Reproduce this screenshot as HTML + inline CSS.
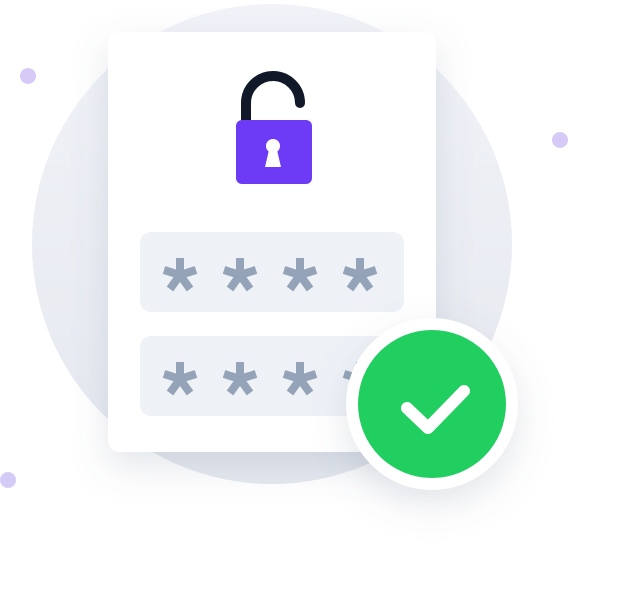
<!DOCTYPE html>
<html><head><style>
html,body{margin:0;padding:0;background:#fff;width:633px;height:614px;overflow:hidden}
</style></head><body>
<svg width="633" height="614" viewBox="0 0 633 614" xmlns="http://www.w3.org/2000/svg">
<defs>
<linearGradient id="bg" x1="0" y1="0" x2="0" y2="1">
<stop offset="0" stop-color="#f1f3f8"/><stop offset="1" stop-color="#e5e8ef"/></linearGradient>
<filter id="sh" x="-30%" y="-30%" width="160%" height="160%"><feDropShadow dx="0" dy="14" stdDeviation="18" flood-color="#64748b" flood-opacity="0.18"/></filter>
<g id="ast"><g stroke="#94a3b8" stroke-width="8">
<line x1="0" y1="0" x2="0" y2="-17"/>
<line x1="0" y1="0" x2="16" y2="-5"/>
<line x1="0" y1="0" x2="-16" y2="-5"/>
<line x1="0" y1="0" x2="10" y2="14"/>
<line x1="0" y1="0" x2="-10" y2="14"/></g></g>
</defs>
<circle cx="272" cy="244" r="240" fill="url(#bg)"/>
<circle cx="28" cy="76" r="8" fill="#d6cbf7"/>
<circle cx="560" cy="140" r="8" fill="#d6cbf7"/>
<circle cx="8" cy="480" r="8" fill="#d6cbf7"/>
<rect x="108" y="32" width="328" height="420" rx="12" fill="#fff" filter="url(#sh)"/>
<path d="M246 124 V103 A27 27 0 0 1 300 103" fill="none" stroke="#111827" stroke-width="10" stroke-linecap="round"/>
<rect x="236" y="120" width="76" height="64" rx="6" fill="#6d3af5"/>
<circle cx="273" cy="146" r="7" fill="#fff"/>
<path d="M269 150 L265 167 H281 L277 150 Z" fill="#fff"/>
<rect x="140" y="232" width="264" height="80" rx="11" fill="#eef2f7"/>
<rect x="140" y="336" width="264" height="80" rx="11" fill="#eef2f7"/>
<use href="#ast" x="180" y="275"/><use href="#ast" x="240" y="275"/><use href="#ast" x="300" y="275"/><use href="#ast" x="360" y="275"/>
<use href="#ast" x="180" y="379"/><use href="#ast" x="240" y="379"/><use href="#ast" x="300" y="379"/><use href="#ast" x="360" y="379"/>
<circle cx="432" cy="404" r="86" fill="#fff" filter="url(#sh)"/>
<circle cx="432" cy="404" r="74" fill="#20cf5f"/>
<path d="M407 408 L428 428 L464 391" fill="none" stroke="#fff" stroke-width="12" stroke-linecap="round" stroke-linejoin="round"/>
</svg>
</body></html>
